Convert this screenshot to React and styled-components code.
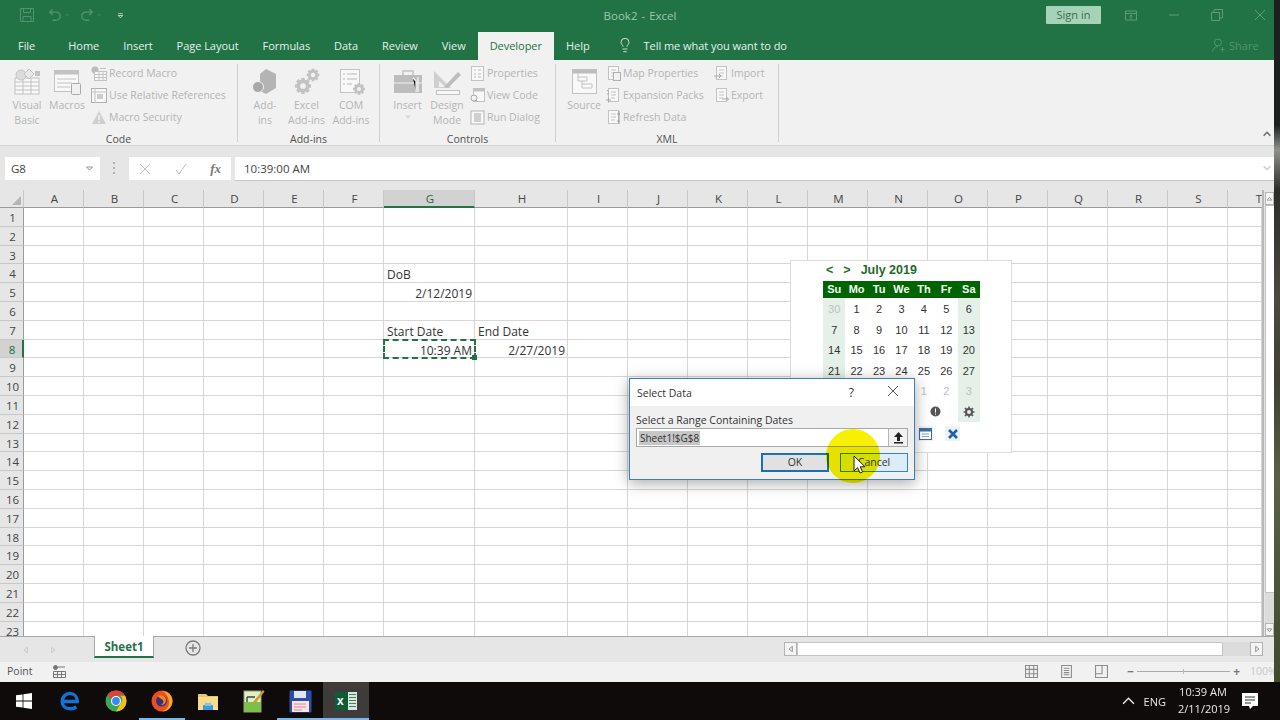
import styled, { createGlobalStyle } from "styled-components";
import { Lightbulb } from "lucide-react";

const GlobalStyle = createGlobalStyle`
  html, body {
    margin: 0;
    padding: 0;
    overflow: hidden;
    background: #000;
  }
  * {
    box-sizing: border-box;
  }
`;

const UI_FONT = `"Open Sans", "Noto Sans", sans-serif`;
const DISABLED = "#b4b4b4";
const ICON = "#c2c2c2";

const Screen = styled.div`
  position: relative;
  width: 1280px;
  height: 720px;
  display: flex;
  flex-direction: column;
  overflow: hidden;
  font-family: ${UI_FONT};
  filter: blur(0.3px);
`;

const Desktop = styled.div`
  display: flex;
  height: 682px;
`;

const ExcelWindow = styled.div`
  width: 1274px;
  display: flex;
  flex-direction: column;
  background: #e6e6e6;
`;

const Wallpaper = styled.div`
  flex: 1;
  background: linear-gradient(
    180deg,
    #1e1e1e 0,
    #1e2020 125px,
    #8f918f 150px,
    #2c2c2a 190px,
    #4a4a40 300px,
    #3f4032 380px,
    #5b6044 480px,
    #414a2c 682px
  );
`;

/* title bar */

const TitleBar = styled.div`
  height: 30px;
  background: #217346;
  display: grid;
  grid-template-columns: 1fr auto 1fr;
  align-items: center;
  color: #9cc9ae;
`;

const QuickAccess = styled.div`
  display: flex;
  align-items: center;
  padding-left: 20px;
`;

const QuickItem = styled.div`
  width: ${(p) => p.$w}px;
  display: flex;
  align-items: center;
  gap: 3px;
`;

const WindowTitle = styled.div`
  font-size: 11.5px;
  padding-left: 6px;
  word-spacing: 1px;
`;

const WindowControls = styled.div`
  display: flex;
  align-items: center;
  justify-content: flex-end;
  gap: 31px;
  padding-right: 8px;
`;

const SignIn = styled.div`
  width: 55px;
  height: 18px;
  margin-right: -7px;
  background: #a6d3b8;
  border-radius: 1px;
  color: #3e6b52;
  font-size: 11px;
  line-height: 18px;
  text-align: center;
`;

const ControlSlot = styled.div`
  width: 12px;
  display: flex;
  justify-content: center;
  color: #5c9c78;
`;

/* tabs */

const TabRow = styled.div`
  height: 30px;
  background: #217346;
  display: flex;
  align-items: flex-end;
  padding-left: 6px;
`;

const Tab = styled.div`
  height: 28px;
  padding: 0 12px 2px;
  display: flex;
  align-items: center;
  font-size: 11px;
  letter-spacing: -0.04px;
  background: ${(p) => (p.$active ? "#f1f1f1" : "transparent")};
  color: ${(p) => (p.$active ? "#217346" : "#e4f0e9")};
  margin-right: ${(p) => (p.$first ? "9px" : "0")};
`;

const TellMe = styled.div`
  display: flex;
  align-items: center;
  gap: 11px;
  height: 28px;
  padding-bottom: 2px;
  margin-left: 15px;
  font-size: 11px;
  letter-spacing: -0.05px;
  color: #e4f0e9;
`;

const Share = styled.div`
  margin-left: auto;
  height: 28px;
  width: 62px;
  padding-bottom: 2px;
  display: flex;
  align-items: center;
  gap: 3px;
  font-size: 11px;
  color: #4f9470;
`;

/* ribbon */

const Ribbon = styled.div`
  height: 86px;
  background: #f1f1f1;
  border-bottom: 1px solid #d2d2d2;
  display: flex;
  position: relative;
`;

const Group = styled.div`
  width: ${(p) => p.$w}px;
  height: 78px;
  margin-top: 4px;
  border-right: 1px solid #d0d0d0;
  display: flex;
  flex-direction: column;
`;

const GroupBody = styled.div`
  height: 67px;
  flex: none;
  display: flex;
  padding-left: 8px;
  margin-top: -2px;
`;

const GroupLabel = styled.div`
  height: 13px;
  line-height: 20px;
  text-align: center;
  font-size: 10.5px;
  color: #505050;
`;

const LargeButton = styled.div`
  width: ${(p) => p.$w}px;
  display: flex;
  flex-direction: column;
  align-items: center;
  font-size: 10.5px;
  line-height: 15px;
  color: ${DISABLED};
  text-align: center;
`;

const LargeIcon = styled.div`
  height: 34px;
  display: flex;
  align-items: flex-end;
  justify-content: center;
  margin-bottom: 2px;
`;

const SmallColumn = styled.div`
  width: ${(p) => (p.$w ? `${p.$w}px` : "auto")};
  margin-left: ${(p) => p.$ml || 0}px;
  display: flex;
  flex-direction: column;
`;

const SmallButton = styled.div`
  height: 22px;
  display: flex;
  align-items: center;
  gap: 2px;
  font-size: 10.5px;
  white-space: nowrap;
  color: ${DISABLED};
`;

const RibbonCollapse = styled.div`
  position: absolute;
  right: 0;
  bottom: 1px;
  width: 12px;
  color: #6a6a6a;
`;

/* formula bar */

const FormulaBar = styled.div`
  height: 44px;
  background: #e6e6e6;
  padding-top: 11px;
  padding-left: 5px;
  display: flex;
  align-items: flex-start;
`;

const NameBox = styled.div`
  width: 95px;
  height: 23px;
  background: #fff;
  display: flex;
  align-items: center;
  justify-content: space-between;
  padding: 0 6px;
  font-size: 11.5px;
  color: #444;
`;

const GripDots = styled.div`
  width: 2px;
  height: 12px;
  margin: 5px 14px 0 13px;
  background: repeating-linear-gradient(180deg, #b0b0b0 0 2px, transparent 2px 5px);
`;

const FormulaButtons = styled.div`
  width: 102px;
  height: 23px;
  background: #fff;
  display: flex;
  align-items: center;
  justify-content: space-between;
  padding: 0 10px;
`;

const FxLabel = styled.span`
  font-family: "Liberation Serif", serif;
  font-style: italic;
  font-weight: 700;
  font-size: 13px;
  color: #777;
`;

const FormulaInput = styled.div`
  flex: 1;
  height: 24px;
  margin-left: 4px;
  background: #fff;
  border-bottom: 1px solid #c6c6c6;
  padding-left: 9px;
  font-size: 11.5px;
  line-height: 23px;
  color: #444;
  display: flex;
  justify-content: space-between;
`;

const FormulaCaret = styled.span`
  width: 12px;
  color: #c8c8c8;
`;

/* sheet */

const SheetArea = styled.div`
  flex: 1;
  min-height: 0;
  display: flex;
  background: #e6e6e6;
`;

const SheetGrid = styled.div`
  width: 1264px;
  height: 446px;
  overflow: hidden;
  display: grid;
  grid-template-columns: 24px repeat(6, 60px) 91px 93px repeat(11, 60px) 34px;
  grid-template-rows: 18px;
  grid-auto-rows: 18.8px;
  border-right: 2px solid #b8b8b8;
  background: #fff;
  font-family: ${UI_FONT};
`;

const Corner = styled.div`
  background: #e6e6e6;
  border-bottom: 1px solid #9a9a9a;
  border-right: 1px solid #c8c8c8;
  display: flex;
  align-items: flex-end;
  justify-content: flex-end;
  padding: 0 2px 2px 0;
`;

const ColHeader = styled.div`
  background: ${(p) => (p.$on ? "#d2d2d2" : "#e6e6e6")};
  border-right: ${(p) => (p.$end ? "0" : "1px solid #c8c8c8")};
  border-bottom: ${(p) => (p.$on ? "2px solid #217346" : "1px solid #9a9a9a")};
  color: ${(p) => (p.$on ? "#1f6b40" : "#444")};
  font-size: 11.5px;
  line-height: 17px;
  padding-left: 2px;
  text-align: ${(p) => (p.$end ? "right" : "center")};
`;

const RowHeader = styled.div`
  background: ${(p) => (p.$on ? "#d2d2d2" : "#e6e6e6")};
  border-bottom: 1px solid #c8c8c8;
  border-right: ${(p) => (p.$on ? "2px solid #217346" : "1px solid #9a9a9a")};
  color: ${(p) => (p.$on ? "#1f6b40" : "#444")};
  font-size: 11.5px;
  line-height: 20px;
  padding-left: 2px;
  text-align: center;
`;

const Cell = styled.div`
  position: relative;
  border-right: 1px solid #d6d6d6;
  border-bottom: 1px solid #d6d6d6;
  padding: 0 2px 0 3px;
  font-size: 12px;
  line-height: 21px;
  white-space: nowrap;
  color: #333;
  text-align: ${(p) => (p.$right ? "right" : "left")};
`;

const CopiedCell = styled(Cell)`
  z-index: 1;
  outline: 2px dashed #217346;
  outline-offset: -1px;
  &::after {
    content: "";
    position: absolute;
    right: -3px;
    bottom: -3px;
    width: 5px;
    height: 5px;
    background: #217346;
  }
`;

const VScroll = styled.div`
  width: 9px;
  margin: 2px 0 0 1px;
  height: 444px;
  display: flex;
  flex-direction: column;
`;

const ScrollButton = styled.div`
  flex: none;
  width: ${(p) => p.$w || 9}px;
  height: 13px;
  background: #f4f4f4;
  border: 1px solid #b4b4b4;
  display: flex;
  align-items: center;
  justify-content: center;
  color: #666;
`;

const VThumb = styled.div`
  height: 388px;
  background: #fff;
  border: 1px solid #c4c4c4;
  border-right: 0;
`;

const VTrack = styled.div`
  flex: 1;
  background: #dcdcdc;
`;

/* sheet tabs */

const SheetTabs = styled.div`
  height: 26px;
  background: #e6e6e6;
  border-top: 1px solid #a8a8a8;
  display: flex;
  padding-left: 22px;
`;

const NavArrow = styled.div`
  width: 27px;
  display: flex;
  align-items: center;
  color: #bdbdbd;
`;

const SheetTab = styled.div`
  width: 60px;
  height: 22px;
  margin: -1px 0 0 18px;
  background: #fff;
  border-left: 1px solid #a8a8a8;
  border-right: 1px solid #a8a8a8;
  border-bottom: 2px solid #217346;
  color: #217346;
  font-size: 11.5px;
  font-weight: 700;
  line-height: 22px;
  text-align: center;
`;

const AddSheet = styled.div`
  margin: 3px 0 0 31px;
  color: #7a7a7a;
  display: flex;
  width: 16px;
`;

const HScroll = styled.div`
  margin: 5px 10px 0 auto;
  width: 480px;
  height: 14px;
  display: flex;
`;

const HThumb = styled.div`
  width: 426px;
  background: #fff;
  border: 1px solid #c4c4c4;
`;

const HTrack = styled.div`
  width: 27px;
  background: #dcdcdc;
`;

const HButton = styled(ScrollButton)`
  height: 14px;
  width: 13px;
`;

/* status bar */

const StatusBar = styled.div`
  height: 20px;
  background: #f1f1f1;
  display: flex;
  align-items: center;
  padding-left: 7px;
  padding-bottom: 2px;
  font-size: 10.5px;
  color: #555;
`;

const StatusIcons = styled.div`
  margin-left: auto;
  display: flex;
  align-items: center;
  gap: 22px;
  color: #8c8c8c;
`;

const ZoomSlider = styled.div`
  display: flex;
  align-items: center;
  gap: 3px;
  margin-left: 19px;
  font-size: 12px;
  font-weight: 700;
  color: #777;
`;

const ZoomTrack = styled.div`
  position: relative;
  width: 93px;
  height: 1px;
  background: #aaa;
  &::after {
    content: "";
    position: absolute;
    left: 46px;
    top: -2px;
    width: 1px;
    height: 5px;
    background: #bbb;
  }
`;

const ZoomValue = styled.div`
  width: 24px;
  margin-left: 10px;
  overflow: hidden;
  font-size: 10.5px;
  color: #c8c8c8;
`;

/* taskbar */

const Taskbar = styled.div`
  height: 38px;
  background: #100b0b;
  display: flex;
  align-items: stretch;
  color: #e8e8e8;
`;

const StartButton = styled.div`
  width: 47px;
  display: flex;
  align-items: center;
  justify-content: center;
`;

const TaskItem = styled.div`
  width: 46px;
  display: flex;
  align-items: center;
  justify-content: center;
  background: ${(p) => (p.$active ? "#3f3b3a" : "transparent")};
  box-shadow: ${(p) => (p.$open ? "inset 0 -2px 0 #76b9ed" : "none")};
`;

const Tray = styled.div`
  margin-left: auto;
  display: flex;
  align-items: center;
  font-size: 11px;
`;

const TrayLang = styled.div`
  margin: 0 12px 0 9px;
`;

const Clock = styled.div`
  width: 50px;
  padding-bottom: 2px;
  text-align: center;
  white-space: nowrap;
  line-height: 17px;
  font-size: 11px;
`;

const Notification = styled.div`
  width: 52px;
  padding-right: 8px;
  display: flex;
  justify-content: center;
`;

/* calendar popup */

const Calendar = styled.div`
  position: absolute;
  left: 790px;
  top: 260px;
  width: 222px;
  height: 193px;
  background: #fff;
  border: 1px solid #dcdcdc;
  padding: 0 0 0 32px;
  font-family: "Liberation Sans", Arial, sans-serif;
  z-index: 2;
`;

const CalendarNav = styled.div`
  height: 20px;
  padding-bottom: 2px;
  display: flex;
  align-items: center;
  gap: 10px;
  padding-left: 3px;
  font-size: 12.5px;
  font-weight: 700;
  color: #1f6b2a;
`;

const MonthName = styled.span`
  margin-left: 0;
`;

const DayGrid = styled.div`
  width: 157px;
  display: grid;
  grid-template-columns: repeat(7, 1fr);
  grid-template-rows: 17px repeat(6, 20.6px);
`;

const DayHead = styled.div`
  background: #006400;
  color: #f2fff2;
  font-size: 11px;
  font-weight: 700;
  line-height: 17px;
  text-align: center;
`;

const Day = styled.div`
  background: ${(p) => (p.$weekend ? "#e5f0e8" : "#fff")};
  color: ${(p) => (p.$muted ? "#c0c0c0" : "#333")};
  font-size: 11px;
  line-height: 22px;
  text-align: center;
`;

const InfoDay = styled(Day)`
  grid-column: span ${(p) => p.$span || 1};
  display: flex;
  align-items: center;
  justify-content: center;
  padding-top: 1px;
`;

const CalendarActions = styled.div`
  width: 157px;
  height: 24px;
  display: flex;
  justify-content: flex-end;
  align-items: center;
  gap: 12px;
  padding-right: 20px;
`;

const ActionButton = styled.div`
  width: 15px;
  height: 15px;
  display: flex;
  align-items: center;
  justify-content: center;
  background: #eef2f6;
`;

/* dialog */

const Dialog = styled.div`
  position: absolute;
  left: 629px;
  top: 378px;
  width: 286px;
  height: 102px;
  display: flex;
  flex-direction: column;
  background: #f0f0f0;
  border: 1px solid #3f7fb6;
  box-shadow: 0 3px 14px rgba(0, 0, 0, 0.35);
  z-index: 3;
  font-size: 10.5px;
  color: #333;
`;

const DialogTitle = styled.div`
  height: 27px;
  background: #fff;
  display: flex;
  align-items: center;
  padding-left: 7px;
  font-size: 10.5px;
`;

const HelpMark = styled.span`
  margin-left: auto;
  margin-right: 33px;
  font-size: 12px;
`;

const DialogClose = styled.span`
  width: 27px;
  color: #555;
`;

const DialogBody = styled.div`
  flex: 1;
  padding: 7px 6px 0;
`;

const RangeInput = styled.div`
  height: 19px;
  margin-top: 1px;
  background: #fff;
  border: 1px solid #a8a8a8;
  display: flex;
  align-items: center;
  padding-left: 2px;
`;

const SelectedText = styled.span`
  background: #c6c6c6;
  line-height: 14px;
  font-size: 10px;
  padding: 0 1px;
`;

const RefButton = styled.div`
  margin-left: auto;
  width: 19px;
  height: 17px;
  background: #f2f2f2;
  border-left: 1px solid #b4b4b4;
  display: flex;
  align-items: center;
  justify-content: center;
`;

const DialogButtons = styled.div`
  display: flex;
  justify-content: flex-end;
  gap: 11px;
  margin-top: 6px;
`;

const DialogButton = styled.div`
  width: 68px;
  height: 19px;
  background: ${(p) => (p.$hover ? "#dcecf9" : "#e1e1e1")};
  border: ${(p) => (p.$hover ? "1px solid #2f86d0" : "2px solid #1c6fb3")};
  font-size: 10.5px;
  line-height: ${(p) => (p.$hover ? "17px" : "15px")};
  text-align: center;
`;

const PointerHalo = styled.div`
  position: absolute;
  left: 826px;
  top: 429px;
  width: 54px;
  height: 54px;
  border-radius: 50%;
  background: #f7f000;
  mix-blend-mode: multiply;
  z-index: 4;
`;

const PointerArrow = styled.div`
  position: absolute;
  left: 853px;
  top: 455px;
  z-index: 5;
  display: flex;
`;

/* drawn icons */

const Gear = ({ x, y, r, color = ICON }) => (
  <g>
    <circle cx={x} cy={y} r={r} fill="none" stroke={color} strokeWidth={r * 0.8} />
    {[0, 45, 90, 135].map((a) => (
      <rect
        key={a}
        x={x - r * 0.38}
        y={y - r * 1.75}
        width={r * 0.76}
        height={r * 3.5}
        fill={color}
        transform={`rotate(${a} ${x} ${y})`}
      />
    ))}
    <circle cx={x} cy={y} r={r * 0.62} fill="#f1f1f1" />
  </g>
);

const TableLines = ({ x, y, w, h, rows = 3 }) => (
  <g fill="none" stroke={ICON}>
    <rect x={x} y={y} width={w} height={h} fill="#f8f8f8" />
    {Array.from({ length: rows }, (_, i) => (
      <path key={i} d={`M${x} ${y + ((i + 1) * h) / (rows + 1)}h${w}`} />
    ))}
    <path d={`M${x + w / 3} ${y}v${h}M${x + (2 * w) / 3} ${y}v${h}`} />
  </g>
);

const VisualBasicIcon = () => (
  <svg width="30" height="28" viewBox="0 0 30 28">
    <TableLines x={3} y={10} w={24} h={16} />
    <ellipse cx="9" cy="7" rx="5" ry="5" fill="#dcdcdc" stroke={ICON} />
    <path d="M17 1l5 5-5 5-5-5z" fill="#e8e8e8" stroke={ICON} />
    <rect x="23" y="3" width="5" height="5" fill={ICON} />
  </svg>
);

const MacrosIcon = () => (
  <svg width="32" height="28" viewBox="0 0 32 28">
    <rect x="3.5" y="2.5" width="24" height="21" fill="#f8f8f8" stroke={ICON} />
    <rect x="3.5" y="2.5" width="24" height="4" fill={ICON} />
    <path d="M6 11h19M6 15h15M6 19h13" stroke={ICON} />
    <rect x="20.5" y="15.5" width="9" height="11" rx="1" fill="#f1f1f1" stroke="#a8a8a8" />
  </svg>
);

const RecordIcon = () => (
  <svg width="16" height="15" viewBox="0 0 16 15">
    <circle cx="4" cy="4" r="3.5" fill="#bbb" />
    <rect x="3.5" y="5.5" width="12" height="9" fill="#f8f8f8" stroke={ICON} />
    <path d="M4 8.5h11M4 11.5h11M8 6v8M12 6v8M9 2.5h6" stroke={ICON} />
  </svg>
);

const RelativeIcon = () => (
  <svg width="16" height="15" viewBox="0 0 16 15">
    <rect x=".5" y=".5" width="15" height="14" fill="#f8f8f8" stroke="#b0b0b0" />
    <path d="M0 4h16M4 0v15" stroke={ICON} />
    <rect x="6" y="6" width="6" height="5" fill="#ccc" />
  </svg>
);

const SecurityIcon = () => (
  <svg width="16" height="15" viewBox="0 0 16 15">
    <path d="M8 1l7 13H1z" fill="#cfcfcf" />
    <path d="M8 5v5M8 11v2" stroke="#f4f4f4" strokeWidth="1.4" />
  </svg>
);

const AddInsIcon = () => (
  <svg width="28" height="28" viewBox="0 0 28 28">
    <path d="M15 1l10 5v14l-10 6-6-3V6z" fill="#b4b4b4" />
    <circle cx="7" cy="19" r="5.5" fill="#a8a8a8" stroke="#f1f1f1" />
  </svg>
);

const ExcelAddInsIcon = () => (
  <svg width="28" height="28" viewBox="0 0 28 28">
    <Gear x={10} y={18} r={4.6} />
    <Gear x={20} y={7} r={3.6} />
  </svg>
);

const ComAddInsIcon = () => (
  <svg width="32" height="28" viewBox="0 0 32 28">
    <rect x="5.5" y="1.5" width="19" height="23" fill="#f8f8f8" stroke={ICON} />
    <path d="M8 6h2M12 6h10M8 11h2M12 11h10M8 16h2M12 16h5" stroke="#b8b8b8" />
    <Gear x={24} y={21} r={3.4} />
  </svg>
);

const ToolboxIcon = () => (
  <svg width="30" height="28" viewBox="0 0 30 28">
    <path d="M10 7V3h10v4" fill="none" stroke={ICON} strokeWidth="1.5" />
    <rect x="1" y="7" width="28" height="18" fill="#bdbdbd" />
    <path d="M1 15h28" stroke="#f1f1f1" />
    <path d="M20 10l3 3v11M25 9v15" stroke="#f1f1f1" strokeWidth="1.4" />
  </svg>
);

const DesignIcon = () => (
  <svg width="32" height="28" viewBox="0 0 32 28">
    <path d="M3 3v17h17z" fill="#cfcfcf" />
    <path d="M8 13v6h6z" fill="#f1f1f1" />
    <path d="M13 19L27 4l3 3-13 13z" fill="#bdbdbd" />
    <rect x="5.5" y="22.5" width="23" height="4" fill="#f8f8f8" stroke={ICON} />
  </svg>
);

const PropertiesIcon = () => (
  <svg width="15" height="15" viewBox="0 0 15 15">
    <rect x="1.5" y=".5" width="12" height="14" fill="#f8f8f8" stroke={ICON} />
    <path d="M4 4h2M8 4h3M4 8h2M8 8h3M4 11h2M8 11h3" stroke="#b8b8b8" />
  </svg>
);

const ViewCodeIcon = () => (
  <svg width="15" height="15" viewBox="0 0 15 15">
    <rect x="3.5" y=".5" width="11" height="13" fill="#f8f8f8" stroke={ICON} />
    <rect x="3.5" y=".5" width="11" height="3" fill={ICON} />
    <circle cx="4" cy="10" r="3" fill="#f1f1f1" stroke="#aaa" />
    <path d="M6 12l2 2" stroke="#aaa" />
  </svg>
);

const RunDialogIcon = () => (
  <svg width="15" height="15" viewBox="0 0 15 15">
    <rect x="1" y="1" width="13" height="13" fill="#f8f8f8" stroke="#b4b4b4" />
    <rect x="4" y="3" width="7" height="9" fill="#cfcfcf" />
  </svg>
);

const SourceIcon = () => (
  <svg width="30" height="28" viewBox="0 0 30 28">
    <rect x="3.5" y="1.5" width="24" height="24" fill="#f8f8f8" stroke={ICON} />
    <rect x="3.5" y="1.5" width="24" height="4" fill="#bdbdbd" />
    <path d="M9 9h9v4H9zM13 13v3h10v4H13v-4M9 5v4" fill="none" stroke={ICON} />
  </svg>
);

const SmallDocIcon = ({ variant }) => (
  <svg width="15" height="15" viewBox="0 0 15 15">
    <rect x="2.5" y=".5" width="10" height="13" fill="#f8f8f8" stroke={ICON} />
    <path d="M5 4h5M5 7h5M5 10h4" stroke="#c4c4c4" />
    {variant === "map" && <rect x="7.5" y="6.5" width="7" height="8" fill="#f1f1f1" stroke="#b0b0b0" />}
    {variant === "pack" && <path d="M0 12h5M2.5 9.5v5M1 2l2 2M1 6h2" stroke="#aaa" />}
    {variant === "refresh" && <path d="M13 1v13M11 4h3M11 11h3" stroke="#9c9c9c" />}
    {variant === "in" && <path d="M0 10h7M5 8l2 2-2 2" fill="none" stroke="#aaa" />}
    {variant === "out" && <path d="M8 11h6.5M12.5 9l2 2-2 2" fill="none" stroke="#aaa" />}
  </svg>
);

const WinLogo = () => (
  <svg width="16" height="16" viewBox="0 0 16 16" fill="#fff">
    <path d="M0 2.3L6.6 1.4V7.6H0zM7.4 1.3L16 0V7.6H7.4zM0 8.4H6.6V14.6L0 13.7zM7.4 8.4H16V16L7.4 14.7z" />
  </svg>
);

const EdgeLogo = () => (
  <svg width="20" height="20" viewBox="0 0 20 20" fill="none">
    <path
      d="M4 10.5h13.2C17.2 5.5 14 2.4 10 2.4 5.6 2.4 2.2 6 2.2 10.4c0 4.6 3.4 7.4 7.8 7.4 2.5 0 4.6-.6 6.4-1.8"
      stroke="#1173d6"
      strokeWidth="3.4"
    />
  </svg>
);

const ChromeLogo = () => (
  <svg width="22" height="22" viewBox="0 0 22 22">
    <circle cx="11" cy="11" r="10.5" fill="#3aa757" />
    <path d="M11 .5a10.5 10.5 0 0 1 9.1 5.3H11a5.2 5.2 0 0 0-5 3.6L2.6 4.7A10.5 10.5 0 0 1 11 .5z" fill="#db4437" />
    <path d="M20.1 5.8A10.5 10.5 0 0 1 11 21.5l4.5-7.8a5.2 5.2 0 0 0 0-7.9z" fill="#f4c20d" />
    <circle cx="11" cy="11" r="5" fill="#fff" />
    <circle cx="11" cy="11" r="3.9" fill="#4285f4" />
  </svg>
);

const FirefoxLogo = () => (
  <svg width="22" height="22" viewBox="0 0 22 22">
    <circle cx="11" cy="11" r="10.5" fill="#e8501f" />
    <path d="M11 1c6 0 10.5 4.5 10.5 10S17 21.5 11 21.5c4-1 7-4.5 7-9C18 7 15 3 11 1z" fill="#f9a825" />
    <circle cx="10.5" cy="11" r="5.5" fill="#38307f" />
    <path d="M7 6c3-2 8 0 8 4 0 3-2 5-5 5 2-1 3-3 2-5-1-1-3-1-5-4z" fill="#f6851f" />
  </svg>
);

const FolderLogo = () => (
  <svg width="22" height="20" viewBox="0 0 22 20">
    <path d="M1 3h8l2 2h10v14H1z" fill="#e9c46a" />
    <rect x="1" y="6" width="20" height="13" fill="#f6dc8c" />
    <rect x="6" y="14" width="10" height="5" fill="#3b9ad9" />
    <rect x="8" y="12" width="6" height="3" fill="#7cc4ec" />
  </svg>
);

const NotesLogo = () => (
  <svg width="22" height="24" viewBox="0 0 22 24">
    <rect x="1" y="2" width="17" height="21" fill="#dff0c8" stroke="#9a9a7a" />
    <rect x="1" y="13" width="17" height="10" fill="#7cc04a" />
    <path d="M4 8h8M4 8v5" stroke="#444" strokeWidth="1.4" />
    <path d="M10 13L20 1l1.5 1.5L12 15z" fill="#c9a227" />
  </svg>
);

const SaveLogo = () => (
  <svg width="23" height="23" viewBox="0 0 23 23">
    <rect x=".5" y=".5" width="22" height="22" rx="1" fill="#2a4fa8" />
    <rect x="5" y="1" width="12" height="7" fill="#dfe6f6" />
    <rect x="3" y="11" width="17" height="11" fill="#fbe3e6" />
    <path d="M5 14h12M5 17h12M5 20h8" stroke="#d98a98" />
  </svg>
);

const ExcelLogo = styled.div`
  position: relative;
  width: 22px;
  height: 18px;
  display: flex;
  align-items: center;
  background: #0e5c35;
  box-shadow: inset -9px 0 0 #d9e8dd;
  color: #fff;
  font-family: "Liberation Sans", Arial, sans-serif;
  font-size: 12px;
  font-weight: 700;
  padding-left: 2px;
  &::after {
    content: "";
    position: absolute;
    right: 1px;
    top: 2px;
    bottom: 2px;
    width: 7px;
    background: repeating-linear-gradient(180deg, #4b7d5f 0 1px, transparent 1px 3px);
  }
`;

const Stroke = ({ d, size = 12, box = 12, w = 1, color = "currentColor" }) => (
  <svg width={size} height={size} viewBox={`0 0 ${box} ${box}`} fill="none" stroke={color} strokeWidth={w}>
    <path d={d} />
  </svg>
);

const COLS = ["A", "B", "C", "D", "E", "F", "G", "H", "I", "J", "K", "L", "M", "N", "O", "P", "Q", "R", "S", "T"];
const ROWS = Array.from({ length: 23 }, (_, i) => i + 1);

const CELL_TEXT = {
  G4: { text: "DoB" },
  G5: { text: "2/12/2019", right: true },
  G7: { text: "Start Date" },
  H7: { text: "End Date" },
  G8: { text: "10:39 AM", right: true },
  H8: { text: "2/27/2019", right: true },
};

const TABS = ["Home", "Insert", "Page Layout", "Formulas", "Data", "Review", "View"];

const WEEK = ["Su", "Mo", "Tu", "We", "Th", "Fr", "Sa"];
const DAYS = [
  30, 1, 2, 3, 4, 5, 6, 7, 8, 9, 10, 11, 12, 13, 14, 15, 16, 17, 18, 19, 20, 21, 22, 23, 24, 25, 26, 27, 28, 29, 30, 31, 1,
  2, 3,
];

const Sheet = () => (
  <SheetGrid>
    <Corner>
      <svg width="9" height="9" viewBox="0 0 9 9">
        <path d="M9 0v9H0z" fill="#b4b4b4" />
      </svg>
    </Corner>
    {COLS.map((c) => (
      <ColHeader key={c} $on={c === "G"} $end={c === "T"}>
        {c}
      </ColHeader>
    ))}
    {ROWS.map((r) => [
      <RowHeader key={r} $on={r === 8}>
        {r}
      </RowHeader>,
      ...COLS.map((c) => {
        const id = `${c}${r}`;
        const data = CELL_TEXT[id];
        const Comp = id === "G8" ? CopiedCell : Cell;
        return (
          <Comp key={id} $right={data?.right}>
            {data?.text}
          </Comp>
        );
      }),
    ])}
  </SheetGrid>
);

const MonthCalendar = () => (
  <Calendar>
    <CalendarNav>
      <span>&lt;</span>
      <span>&gt;</span>
      <MonthName>July 2019</MonthName>
    </CalendarNav>
    <DayGrid>
      {WEEK.map((d) => (
        <DayHead key={d}>{d}</DayHead>
      ))}
      {DAYS.map((d, i) => (
        <Day key={i} $weekend={i % 7 === 0 || i % 7 === 6} $muted={i === 0 || i > 31}>
          {d}
        </Day>
      ))}
      <InfoDay $weekend />
      <InfoDay />
      <InfoDay />
      <InfoDay />
      <InfoDay $span={2}>
        <svg width="11" height="11" viewBox="0 0 11 11">
          <circle cx="5.5" cy="5.5" r="5" fill="#555" />
          <path d="M5.5 2.5v4M5.5 7.5v1.2" stroke="#fff" />
        </svg>
      </InfoDay>
      <InfoDay $weekend>
        <svg width="12" height="12" viewBox="0 0 12 12">
          <circle cx="6" cy="6" r="3" fill="none" stroke="#555" strokeWidth="2" />
          <path
            d="M6 .5v2M6 9.5v2M.5 6h2M9.5 6h2M2 2l1.5 1.5M8.5 8.5L10 10M10 2L8.5 3.5M3.5 8.5L2 10"
            stroke="#555"
            strokeWidth="1.6"
          />
        </svg>
      </InfoDay>
    </DayGrid>
    <CalendarActions>
      <ActionButton>
        <svg width="13" height="12" viewBox="0 0 13 12">
          <rect x=".5" y=".5" width="12" height="11" fill="#fff" stroke="#3f6f9f" />
          <rect x=".5" y=".5" width="12" height="3" fill="#3f6f9f" />
          <path d="M3 6h7M3 8.5h7" stroke="#8aa8c6" />
        </svg>
      </ActionButton>
      <ActionButton>
        <Stroke d="M2 2l8 8M10 2l-8 8" w={2.6} color="#1e5fa8" />
      </ActionButton>
    </CalendarActions>
  </Calendar>
);

const SelectDataDialog = () => (
  <Dialog>
    <DialogTitle>
      Select Data
      <HelpMark>?</HelpMark>
      <DialogClose>
        <Stroke d="M1 1l10 10M11 1L1 11" />
      </DialogClose>
    </DialogTitle>
    <DialogBody>
      Select a Range Containing Dates
      <RangeInput>
        <SelectedText>Sheet1!$G$8</SelectedText>
        <RefButton>
          <svg width="11" height="12" viewBox="0 0 11 12" fill="#222">
            <path d="M5.5 0L10 5H7v4H4V5H1zM1 10h9v1.4H1z" />
          </svg>
        </RefButton>
      </RangeInput>
      <DialogButtons>
        <DialogButton>OK</DialogButton>
        <DialogButton $hover>Cancel</DialogButton>
      </DialogButtons>
    </DialogBody>
  </Dialog>
);

const App = () => (
  <Screen>
    <GlobalStyle />
    <Desktop>
      <ExcelWindow>
        <TitleBar>
          <QuickAccess>
            <QuickItem $w={28}>
              <svg width="14" height="14" viewBox="0 0 14 14" fill="none" stroke="#4f9470">
                <path d="M.5.5h13v13H.5zM3.5.5v4h7v-4M3 13.5v-5h8v5" />
              </svg>
            </QuickItem>
            <QuickItem $w={32}>
              <Stroke d="M4 1L1.5 3.5 4 6M2 3.5h5a3.5 3.5 0 0 1 0 7H4" size={14} w={1.2} color="#4f9470" />
              <Stroke d="M2 4h8L6 8z" size={5} color="#4f9470" />
            </QuickItem>
            <QuickItem $w={36}>
              <Stroke d="M8 1l2.5 2.5L8 6M10 3.5H5a3.5 3.5 0 0 0 0 7h3" size={14} w={1.2} color="#4f9470" />
              <Stroke d="M2 4h8L6 8z" size={5} color="#4f9470" />
            </QuickItem>
            <Stroke d="M3 3.5h6M3 6l3 3 3-3z" size={9} color="#e4f0e9" />
          </QuickAccess>
          <WindowTitle>Book2 - Excel</WindowTitle>
          <WindowControls>
            <SignIn>Sign in</SignIn>
            <ControlSlot>
              <Stroke d="M.5 2h11v9H.5zM.5 4.5h11M6 10V6M4.5 7.5L6 6l1.5 1.5" />
            </ControlSlot>
            <ControlSlot>
              <Stroke d="M1 6h10" />
            </ControlSlot>
            <ControlSlot>
              <Stroke d="M.5 3.5h8v8h-8zM3 3V.5h8.5V9H9" />
            </ControlSlot>
            <ControlSlot>
              <Stroke d="M1 1l10 10M11 1L1 11" />
            </ControlSlot>
          </WindowControls>
        </TitleBar>

        <TabRow>
          <Tab $first>File</Tab>
          {TABS.map((t) => (
            <Tab key={t}>{t}</Tab>
          ))}
          <Tab $active>Developer</Tab>
          <Tab>Help</Tab>
          <TellMe>
            <Lightbulb size={16} strokeWidth={1.3} />
            Tell me what you want to do
          </TellMe>
          <Share>
            <svg width="14" height="14" viewBox="0 0 14 14" fill="none" stroke="#4f9470">
              <circle cx="6" cy="4.5" r="3.5" />
              <path d="M.5 13.5c.5-3 2.5-5 5.5-5M10.5 9v4.5M8.5 11.5h4" />
            </svg>
            Share
          </Share>
        </TabRow>

        <Ribbon>
          <Group $w={238}>
            <GroupBody>
              <LargeButton $w={38}>
                <LargeIcon>
                  <VisualBasicIcon />
                </LargeIcon>
                Visual Basic
              </LargeButton>
              <LargeButton $w={42}>
                <LargeIcon>
                  <MacrosIcon />
                </LargeIcon>
                Macros
              </LargeButton>
              <SmallColumn $ml={3}>
                <SmallButton>
                  <RecordIcon />
                  Record Macro
                </SmallButton>
                <SmallButton>
                  <RelativeIcon />
                  Use Relative References
                </SmallButton>
                <SmallButton>
                  <SecurityIcon />
                  Macro Security
                </SmallButton>
              </SmallColumn>
            </GroupBody>
            <GroupLabel>Code</GroupLabel>
          </Group>

          <Group $w={142}>
            <GroupBody>
              <LargeButton $w={38}>
                <LargeIcon>
                  <AddInsIcon />
                </LargeIcon>
                Add-
                <br />
                ins
              </LargeButton>
              <LargeButton $w={45}>
                <LargeIcon>
                  <ExcelAddInsIcon />
                </LargeIcon>
                Excel Add-ins
              </LargeButton>
              <LargeButton $w={44}>
                <LargeIcon>
                  <ComAddInsIcon />
                </LargeIcon>
                COM Add-ins
              </LargeButton>
            </GroupBody>
            <GroupLabel>Add-ins</GroupLabel>
          </Group>

          <Group $w={176}>
            <GroupBody>
              <LargeButton $w={39}>
                <LargeIcon>
                  <ToolboxIcon />
                </LargeIcon>
                Insert
                <Stroke d="M3 4h6L6 8z" size={8} color="#c4c4c4" />
              </LargeButton>
              <LargeButton $w={40}>
                <LargeIcon>
                  <DesignIcon />
                </LargeIcon>
                Design Mode
              </LargeButton>
              <SmallColumn $ml={3}>
                <SmallButton>
                  <PropertiesIcon />
                  Properties
                </SmallButton>
                <SmallButton>
                  <ViewCodeIcon />
                  View Code
                </SmallButton>
                <SmallButton>
                  <RunDialogIcon />
                  Run Dialog
                </SmallButton>
              </SmallColumn>
            </GroupBody>
            <GroupLabel>Controls</GroupLabel>
          </Group>

          <Group $w={223}>
            <GroupBody>
              <LargeButton $w={40}>
                <LargeIcon>
                  <SourceIcon />
                </LargeIcon>
                Source
              </LargeButton>
              <SmallColumn $ml={2} $w={108}>
                <SmallButton>
                  <SmallDocIcon variant="map" />
                  Map Properties
                </SmallButton>
                <SmallButton>
                  <SmallDocIcon variant="pack" />
                  Expansion Packs
                </SmallButton>
                <SmallButton>
                  <SmallDocIcon variant="refresh" />
                  Refresh Data
                </SmallButton>
              </SmallColumn>
              <SmallColumn>
                <SmallButton>
                  <SmallDocIcon variant="in" />
                  Import
                </SmallButton>
                <SmallButton>
                  <SmallDocIcon variant="out" />
                  Export
                </SmallButton>
              </SmallColumn>
            </GroupBody>
            <GroupLabel>XML</GroupLabel>
          </Group>

          <RibbonCollapse>
            <Stroke d="M2 8l4-4 4 4" size={10} w={1.8} />
          </RibbonCollapse>
        </Ribbon>

        <FormulaBar>
          <NameBox>
            G8
            <Stroke d="M2 4h8L6 8z" size={9} color="#777" />
          </NameBox>
          <GripDots />
          <FormulaButtons>
            <Stroke d="M1 1l10 10M11 1L1 11" color="#c0c0c0" />
            <Stroke d="M1 7l3 4 7-10" color="#c0c0c0" />
            <FxLabel>fx</FxLabel>
          </FormulaButtons>
          <FormulaInput>
            10:39:00 AM
            <FormulaCaret>
              <Stroke d="M2 4l4 4 4-4" size={10} w={1.6} />
            </FormulaCaret>
          </FormulaInput>
        </FormulaBar>

        <SheetArea>
          <Sheet />
          <VScroll>
            <ScrollButton>
              <Stroke d="M2 8h8L6 3z" size={8} />
            </ScrollButton>
            <VThumb />
            <VTrack />
            <ScrollButton>
              <Stroke d="M2 4h8L6 9z" size={8} />
            </ScrollButton>
          </VScroll>
        </SheetArea>

        <SheetTabs>
          <NavArrow>
            <Stroke d="M8 2v8L3 6z" size={8} />
          </NavArrow>
          <NavArrow>
            <Stroke d="M4 2v8l5-4z" size={8} />
          </NavArrow>
          <SheetTab>Sheet1</SheetTab>
          <AddSheet>
            <svg width="16" height="16" viewBox="0 0 16 16" fill="none" stroke="currentColor" strokeWidth="1.3">
              <circle cx="8" cy="8" r="7" />
              <path d="M8 4v8M4 8h8" />
            </svg>
          </AddSheet>
          <HScroll>
            <HButton>
              <Stroke d="M8 2v8L3 6z" size={8} />
            </HButton>
            <HThumb />
            <HTrack />
            <HButton>
              <Stroke d="M4 2v8l5-4z" size={8} />
            </HButton>
          </HScroll>
        </SheetTabs>

        <StatusBar>
          Point
          <svg width="13" height="13" viewBox="0 0 13 13" fill="none" stroke="#777" style={{ marginLeft: 21 }}>
            <circle cx="2.5" cy="2.5" r="2" fill="#777" />
            <path d="M5 2h7M.5 6.5h12v6H.5zM.5 9.5h12M4.5 6.5v6M8.5 6.5v6" />
          </svg>
          <StatusIcons>
            <Stroke d="M.5.5h11v11H.5zM.5 4h11M.5 8h11M4 .5v11M8 .5v11" size={13} />
            <Stroke d="M1.5.5h9v11h-9zM3.5 3h5M3.5 5h5M3.5 7h5M3.5 9h5" size={13} />
            <Stroke d="M.5.5h11v11H.5zM.5 8h6V.5" size={13} />
          </StatusIcons>
          <ZoomSlider>
            −
            <ZoomTrack />
            +
          </ZoomSlider>
          <ZoomValue>100%</ZoomValue>
        </StatusBar>
      </ExcelWindow>
      <Wallpaper />
    </Desktop>

    <Taskbar>
      <StartButton>
        <WinLogo />
      </StartButton>
      <TaskItem>
        <EdgeLogo />
      </TaskItem>
      <TaskItem>
        <ChromeLogo />
      </TaskItem>
      <TaskItem $open>
        <FirefoxLogo />
      </TaskItem>
      <TaskItem>
        <FolderLogo />
      </TaskItem>
      <TaskItem>
        <NotesLogo />
      </TaskItem>
      <TaskItem $open>
        <SaveLogo />
      </TaskItem>
      <TaskItem $open $active>
        <ExcelLogo>x</ExcelLogo>
      </TaskItem>
      <Tray>
        <Stroke d="M1 8l5-5 5 5" size={13} w={1.3} />
        <TrayLang>ENG</TrayLang>
        <Clock>
          10:39 AM
          <br />
          2/11/2019
        </Clock>
        <Notification>
          <svg width="16" height="16" viewBox="0 0 16 16">
            <path d="M0 0h16v13h-5l-3 3-1-3H0z" fill="#fff" />
            <path d="M3 4h10M3 7h10M3 10h6" stroke="#333" />
          </svg>
        </Notification>
      </Tray>
    </Taskbar>

    <MonthCalendar />
    <SelectDataDialog />
    <PointerHalo />
    <PointerArrow>
      <svg width="13" height="20" viewBox="0 0 13 20">
        <path d="M1 1v15l3.6-3.4L7 18l2.6-1-2.4-5.2h4.8z" fill="#fff" stroke="#222" />
      </svg>
    </PointerArrow>
  </Screen>
);

export default App;
